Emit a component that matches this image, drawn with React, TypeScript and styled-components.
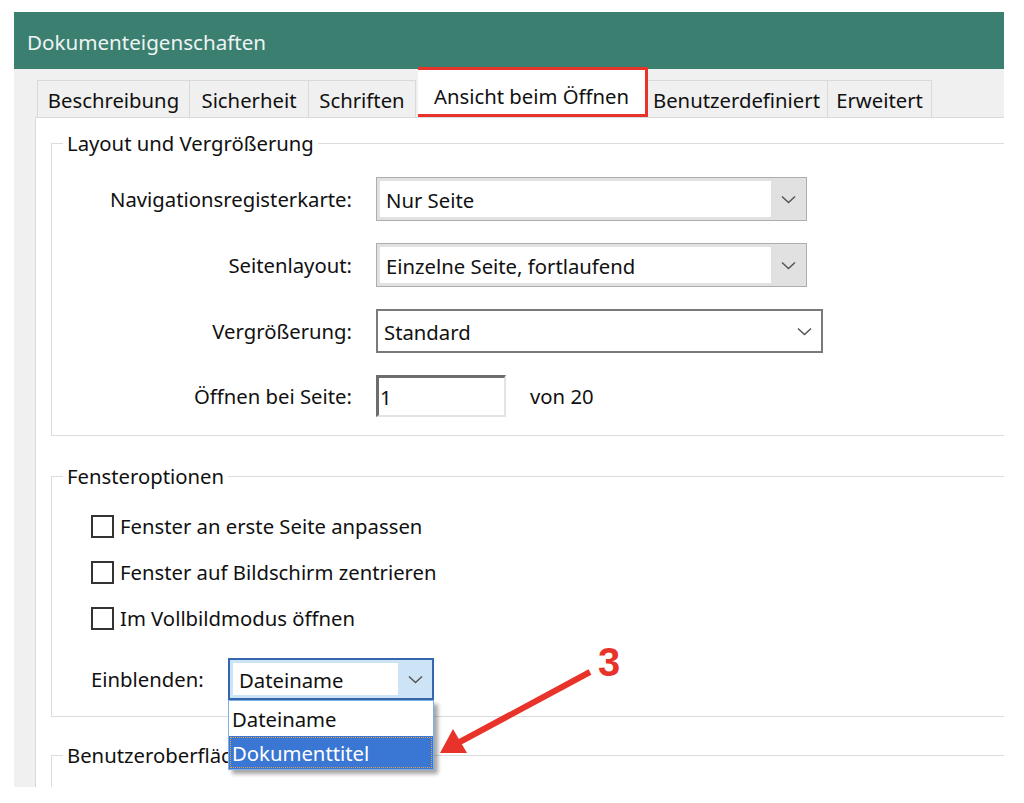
import React from "react";
import styled, { createGlobalStyle } from "styled-components";

const FS = 20.3;

const Global = createGlobalStyle`
  html, body { margin: 0; padding: 0; background: #ffffff; }
  body { font-family: "Noto Sans", "Open Sans", sans-serif; color: #111; }
  * { box-sizing: border-box; }
`;

const Page = styled.div`
  position: relative;
  width: 1024px;
  height: 803px;
  padding: 12px 0 0 14px;
  overflow: hidden;
`;

const Dialog = styled.div`
  position: relative;
  width: 990px;
  height: 775px;
  background: #f0f0f0;
  display: flex;
  flex-direction: column;
  overflow: hidden;
`;

const TitleBar = styled.div`
  height: 57px;
  flex: none;
  background: #3b7f71;
  color: #eef4f2;
  font-size: 20.6px;
  display: flex;
  align-items: center;
  padding: 2px 0 0 13px;
`;

const TabStrip = styled.div`
  display: flex;
  align-items: flex-end;
  height: 48px;
  flex: none;
  padding-left: 23px;
`;

const Tab = styled.div<{ $w: number; $active?: boolean }>`
  width: ${(p) => p.$w}px;
  height: ${(p) => (p.$active ? 50 : 37)}px;
  margin-left: ${(p) => (p.$active ? 2 : 0)}px;
  margin-right: ${(p) => (p.$active ? -2 : 0)}px;
  display: flex;
  align-items: center;
  justify-content: center;
  font-size: ${FS}px;
  color: #111;
  background: ${(p) => (p.$active ? "#ffffff" : "#f0f0f0")};
  border: ${(p) => (p.$active ? "3px solid #e8332a" : "1px solid #d9d9d9")};
  border-bottom: ${(p) => (p.$active ? "3px solid #e8332a" : "none")};
  padding-top: ${(p) => (p.$active ? 7 : 1)}px;
  position: relative;
  z-index: ${(p) => (p.$active ? 2 : 1)};
  & + & { border-left-width: ${(p) => (p.$active ? 3 : 0)}px; }
`;

const Panel = styled.div`
  flex: 1;
  margin-left: 21px;
  background: #ffffff;
  border-top: 1px solid #d9d9d9;
  border-left: 1px solid #d9d9d9;
  padding: 13px 0 0 15px;
  display: flex;
  flex-direction: column;
`;

const Group = styled.fieldset<{ $gap?: number; $padTop: number; $padBottom: number }>`
  margin: ${(p) => p.$gap ?? 0}px 0 0 0;
  border: 1px solid #dcdcdc;
  border-right: none;
  padding: ${(p) => p.$padTop}px 0 ${(p) => p.$padBottom}px 0;
  min-inline-size: 0;
  position: relative;
`;

const Legend = styled.legend`
  margin-left: 11px;
  padding: 0 4px;
  font-size: ${FS}px;
  line-height: 24px;
  color: #111;
`;

const GroupBody = styled.div<{ $indent: number }>`
  padding-left: ${(p) => p.$indent}px;
`;

const FormGrid = styled.div`
  display: grid;
  grid-template-columns: 300px auto;
  column-gap: 24px;
  row-gap: 22px;
  align-items: center;
  justify-items: start;
`;

const Label = styled.span`
  justify-self: end;
  font-size: ${FS}px;
  color: #111;
  white-space: nowrap;
`;

type Variant = "gray" | "edit" | "focus";

const Combo = styled.div<{ $w: number; $variant: Variant }>`
  width: ${(p) => p.$w}px;
  height: ${(p) => (p.$variant === "focus" ? 42 : 44)}px;
  display: flex;
  align-items: stretch;
  padding: 3px 0 3px 3px;
  background: ${(p) =>
    p.$variant === "gray" ? "#e1e1e1" : p.$variant === "focus" ? "#cde3f6" : "#ffffff"};
  border: ${(p) =>
    p.$variant === "gray"
      ? "1px solid #adadad"
      : p.$variant === "focus"
      ? "2px solid #3567ad"
      : "2px solid #7a7a7a"};
  position: relative;
`;

const ComboField = styled.div<{ $variant: Variant }>`
  flex: 1;
  background: #ffffff;
  display: flex;
  align-items: center;
  padding-left: ${(p) => (p.$variant === "edit" ? 3 : 6)}px;
  padding-top: 1px;
  font-size: ${FS}px;
  color: #111;
  white-space: nowrap;
`;

const Arrow = styled.div<{ $w: number }>`
  width: ${(p) => p.$w}px;
  flex: none;
  display: flex;
  align-items: center;
  justify-content: center;
`;

const Chevron = () => (
  <svg width="15" height="9" viewBox="0 0 15 9">
    <polyline points="1,1.5 7.5,7.5 14,1.5" fill="none" stroke="#555" strokeWidth="1.5" />
  </svg>
);

const PageRow = styled.div`
  display: flex;
  align-items: center;
  gap: 24px;
`;

const NumberInput = styled.div`
  width: 130px;
  height: 42px;
  border-top: 3px solid #6d6d6d;
  border-left: 3px solid #6d6d6d;
  border-right: 2px solid #e3e3e3;
  border-bottom: 2px solid #e3e3e3;
  display: flex;
  align-items: center;
  padding-left: 1px;
  font-size: ${FS}px;
  color: #111;
`;

const Plain = styled.span`
  font-size: ${FS}px;
  color: #111;
`;

const CheckList = styled.div`
  display: flex;
  flex-direction: column;
  gap: 14px;
`;

const CheckRow = styled.label`
  display: flex;
  align-items: center;
  height: 32px;
  gap: 6px;
  font-size: ${FS}px;
  color: #111;
`;

const Box = styled.span`
  width: 23px;
  height: 23px;
  border: 2px solid #333;
  background: #fff;
  flex: none;
`;

const ShowRow = styled.div`
  display: flex;
  align-items: center;
  margin-top: 24px;
`;

const ShowLabel = styled.span`
  width: 137px;
  font-size: ${FS}px;
  color: #111;
`;

const ComboWrap = styled.div`
  position: relative;
`;

const DropList = styled.div`
  position: absolute;
  left: 0;
  top: 100%;
  width: 206px;
  background: #ffffff;
  border: 1px solid #7fb0e6;
  box-shadow: 4px 4px 4px rgba(0, 0, 0, 0.35);
  z-index: 5;
`;

const DropItem = styled.div<{ $selected?: boolean }>`
  height: ${(p) => (p.$selected ? 33 : 35)}px;
  display: flex;
  align-items: center;
  padding-left: 3px;
  font-size: ${FS}px;
  color: ${(p) => (p.$selected ? "#ffffff" : "#111")};
  background: ${(p) => (p.$selected ? "#3a76d3" : "#ffffff")};
  outline: ${(p) => (p.$selected ? "1px dotted #e3a24a" : "none")};
  outline-offset: -2px;
`;

const Annotation = styled.svg`
  position: absolute;
  left: 0;
  top: 0;
  pointer-events: none;
  z-index: 10;
`;

const StepNumber = styled.span`
  position: absolute;
  left: 598px;
  top: 640px;
  font-family: "Liberation Sans", Arial, sans-serif;
  font-weight: 700;
  font-size: 40px;
  line-height: 44px;
  color: #e8332a;
  z-index: 10;
`;

const tabs: { label: string; w: number; active?: boolean }[] = [
  { label: "Beschreibung", w: 153 },
  { label: "Sicherheit", w: 119 },
  { label: "Schriften", w: 107 },
  { label: "Ansicht beim Öffnen", w: 230, active: true },
  { label: "Benutzerdefiniert", w: 182 },
  { label: "Erweitert", w: 104 },
];

export default function App() {
  return (
    <>
      <Global />
      <Page>
        <Dialog>
          <TitleBar>Dokumenteigenschaften</TitleBar>
          <TabStrip>
            {tabs.map((t) => (
              <Tab key={t.label} $w={t.w} $active={t.active}>
                {t.label}
              </Tab>
            ))}
          </TabStrip>
          <Panel>
            <Group $padTop={22} $padBottom={18}>
              <Legend>Layout und Vergrößerung</Legend>
              <FormGrid>
                <Label>Navigationsregisterkarte:</Label>
                <Combo $w={431} $variant="gray">
                  <ComboField $variant="gray">Nur Seite</ComboField>
                  <Arrow $w={35}>
                    <Chevron />
                  </Arrow>
                </Combo>
                <Label>Seitenlayout:</Label>
                <Combo $w={431} $variant="gray">
                  <ComboField $variant="gray">Einzelne Seite, fortlaufend</ComboField>
                  <Arrow $w={35}>
                    <Chevron />
                  </Arrow>
                </Combo>
                <Label>Vergrößerung:</Label>
                <Combo $w={447} $variant="edit">
                  <ComboField $variant="edit">Standard</ComboField>
                  <Arrow $w={34}>
                    <Chevron />
                  </Arrow>
                </Combo>
                <Label>Öffnen bei Seite:</Label>
                <PageRow>
                  <NumberInput>1</NumberInput>
                  <Plain>von 20</Plain>
                </PageRow>
              </FormGrid>
            </Group>

            <Group $gap={28} $padTop={22} $padBottom={16}>
              <Legend>Fensteroptionen</Legend>
              <GroupBody $indent={39}>
                <CheckList>
                  <CheckRow>
                    <Box />
                    Fenster an erste Seite anpassen
                  </CheckRow>
                  <CheckRow>
                    <Box />
                    Fenster auf Bildschirm zentrieren
                  </CheckRow>
                  <CheckRow>
                    <Box />
                    Im Vollbildmodus öffnen
                  </CheckRow>
                </CheckList>
                <ShowRow>
                  <ShowLabel>Einblenden:</ShowLabel>
                  <ComboWrap>
                    <Combo $w={206} $variant="focus">
                      <ComboField $variant="focus">Dateiname</ComboField>
                      <Arrow $w={34}>
                        <Chevron />
                      </Arrow>
                    </Combo>
                    <DropList>
                      <DropItem>Dateiname</DropItem>
                      <DropItem $selected>Dokumenttitel</DropItem>
                    </DropList>
                  </ComboWrap>
                </ShowRow>
              </GroupBody>
            </Group>

            <Group $gap={26} $padTop={40} $padBottom={0}>
              <Legend>Benutzeroberfläche</Legend>
            </Group>
          </Panel>
        </Dialog>
        <Annotation width="1024" height="803" viewBox="0 0 1024 803">
          <line x1="590" y1="672" x2="456" y2="744" stroke="#e8332a" strokeWidth="6" />
          <polygon points="440,753 453,729 467,753" fill="#e8332a" />
        </Annotation>
        <StepNumber>3</StepNumber>
      </Page>
    </>
  );
}
